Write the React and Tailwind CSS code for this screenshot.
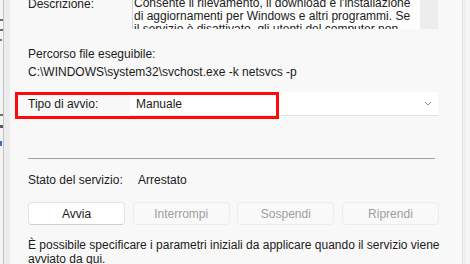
import React from 'react';

const font = { fontFamily: '"Liberation Sans", Arial, sans-serif' };

// --- bits of the window behind, cut by the left edge ---
const LeftEdge = () => (
    <div className="flex h-full shrink-0">
        <svg width="3" height="264" className="bg-[#f4f4f4]">
            <rect x="0" y="19" width="3" height="2" fill="#6b6b6b" />
            <rect x="0" y="29" width="3" height="2" fill="#6b6b6b" />
            <rect x="0" y="39" width="2" height="2" fill="#7a7a7a" />
            <rect x="0" y="114" width="3" height="2" fill="#6b6b6b" />
            <rect x="0" y="125" width="3" height="3" fill="#5a5a5a" />
            <rect x="0" y="141" width="2" height="5" fill="#3d6fb8" />
        </svg>
        <div className="w-px h-full bg-[#c4c4c4]" />
        <div className="w-[6px] h-full bg-[#ececec]" />
    </div>
);

const ActionButton = ({ label, enabled }) => (
    <button
        className={`w-[97px] h-[23px] rounded-[4px] border text-[12px] flex items-center justify-center ${
            enabled
                ? 'bg-white border-[#e3e3e3] border-b-[#cfcfcf] text-[#1b1b1b]'
                : 'bg-[#f9f9f9] border-[#ececec] text-[#9e9e9e]'
        }`}
    >
        {label}
    </button>
);

const descriptionLines = [
    "Consente il rilevamento, il download e l'installazione",
    'di aggiornamenti per Windows e altri programmi. Se',
    'il servizio è disattivato, gli utenti del computer non',
];

export default function App() {
    return (
        <div className="w-[470px] h-[264px] flex overflow-hidden bg-[#f8f8f8] text-[#1b1b1b]" style={font}>
            <LeftEdge />

            <div className="flex-1 flex flex-col pl-[18px] text-[12px]">
                {/* Descrizione */}
                <div className="flex -mt-[4px] h-[33px] shrink-0">
                    <div className="w-[104px] pt-[2px] leading-[13px]">Descrizione:</div>
                    <div className="w-[306px] flex border-l border-t border-[#d4d4d4] bg-[#fdfdfd] overflow-hidden">
                        <div className="flex-1 pl-[1px] leading-[13px] whitespace-nowrap">
                            {descriptionLines.map(line => (
                                <div key={line}>{line}</div>
                            ))}
                        </div>
                        <div className="w-[18px] bg-[#ededed]" />
                    </div>
                </div>

                <div className="mt-[17px] leading-[16px]">Percorso file eseguibile:</div>
                <div className="mt-[2px] leading-[16px]">C:\WINDOWS\system32\svchost.exe -k netsvcs -p</div>

                {/* Tipo di avvio */}
                <div className="relative mt-[12px] flex items-center h-[24px] shrink-0">
                    <div className="w-[102px]">Tipo di avvio:</div>
                    <div className="w-[308px] h-[24px] flex items-center justify-between bg-white border-b border-[#e2e2e2] pl-[6px] pr-[6px]">
                        <span>Manuale</span>
                        <svg width="8" height="5" viewBox="0 0 8 5">
                            <path d="M1 1 L4 4 L7 1" fill="none" stroke="#8a8a8a" strokeWidth="1" />
                        </svg>
                    </div>
                    <div className="absolute -left-[13px] top-0 w-[264px] h-[27px] border-[3px] border-[#ff0a0a]" />
                </div>

                <div className="mt-[42px] w-[407px] h-px bg-[#a3a3a3] shrink-0" />

                <div className="mt-[13px] flex leading-[16px]">
                    <span className="w-[110px]">Stato del servizio:</span>
                    <span>Arrestato</span>
                </div>

                <div className="mt-[14px] w-[411px] flex justify-between shrink-0">
                    <ActionButton label="Avvia" enabled />
                    <ActionButton label="Interrompi" />
                    <ActionButton label="Sospendi" />
                    <ActionButton label="Riprendi" />
                </div>

                <div className="mt-[13px] w-[420px] leading-[14px]">
                    È possibile specificare i parametri iniziali da applicare quando il servizio viene avviato da qui.
                </div>
            </div>

            <div className="flex h-full shrink-0">
                <div className="w-px h-full bg-[#e4e4e4]" />
                <div className="w-[3px] h-full bg-[#efefef]" />
                <div className="w-[4px] h-full bg-[#f6f6f6]" />
            </div>
        </div>
    );
}
